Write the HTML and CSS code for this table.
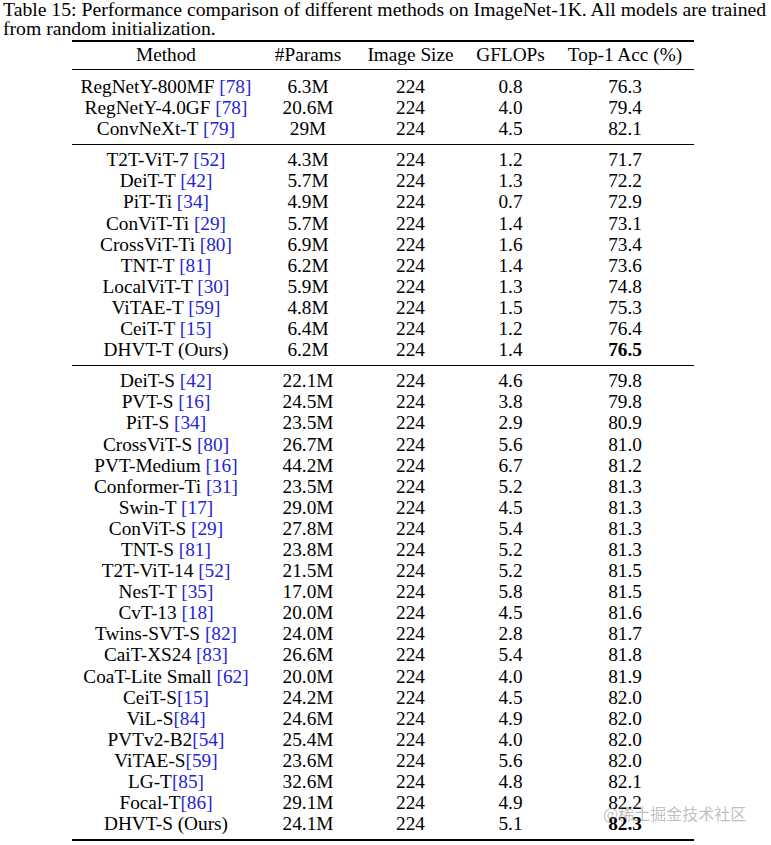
FILE: index.html
```html
<!DOCTYPE html>
<html>
<head>
<meta charset="utf-8">
<link rel="stylesheet" href="styles.css">
</head>
<body>
<div class="page">
  <p class="caption">Table 15: Performance comparison of different methods on ImageNet-1K. All models are trained from random initialization.</p>
  <div class="tbl">
    <div class="row head"><span>Method</span><span>#Params</span><span>Image Size</span><span>GFLOPs</span><span>Top-1 Acc (%)</span></div>
    <div class="group g1">
      <div class="row"><span>RegNetY-800MF <a>[78]</a></span><span>6.3M</span><span>224</span><span>0.8</span><span>76.3</span></div>
      <div class="row"><span>RegNetY-4.0GF <a>[78]</a></span><span>20.6M</span><span>224</span><span>4.0</span><span>79.4</span></div>
      <div class="row"><span>ConvNeXt-T <a>[79]</a></span><span>29M</span><span>224</span><span>4.5</span><span>82.1</span></div>
    </div>
    <div class="group">
      <div class="row"><span>T2T-ViT-7 <a>[52]</a></span><span>4.3M</span><span>224</span><span>1.2</span><span>71.7</span></div>
      <div class="row"><span>DeiT-T <a>[42]</a></span><span>5.7M</span><span>224</span><span>1.3</span><span>72.2</span></div>
      <div class="row"><span>PiT-Ti <a>[34]</a></span><span>4.9M</span><span>224</span><span>0.7</span><span>72.9</span></div>
      <div class="row"><span>ConViT-Ti <a>[29]</a></span><span>5.7M</span><span>224</span><span>1.4</span><span>73.1</span></div>
      <div class="row"><span>CrossViT-Ti <a>[80]</a></span><span>6.9M</span><span>224</span><span>1.6</span><span>73.4</span></div>
      <div class="row"><span>TNT-T <a>[81]</a></span><span>6.2M</span><span>224</span><span>1.4</span><span>73.6</span></div>
      <div class="row"><span>LocalViT-T <a>[30]</a></span><span>5.9M</span><span>224</span><span>1.3</span><span>74.8</span></div>
      <div class="row"><span>ViTAE-T <a>[59]</a></span><span>4.8M</span><span>224</span><span>1.5</span><span>75.3</span></div>
      <div class="row"><span>CeiT-T <a>[15]</a></span><span>6.4M</span><span>224</span><span>1.2</span><span>76.4</span></div>
      <div class="row"><span>DHVT-T (Ours)</span><span>6.2M</span><span>224</span><span>1.4</span><span><b>76.5</b></span></div>
    </div>
    <div class="group">
      <div class="row"><span>DeiT-S <a>[42]</a></span><span>22.1M</span><span>224</span><span>4.6</span><span>79.8</span></div>
      <div class="row"><span>PVT-S <a>[16]</a></span><span>24.5M</span><span>224</span><span>3.8</span><span>79.8</span></div>
      <div class="row"><span>PiT-S <a>[34]</a></span><span>23.5M</span><span>224</span><span>2.9</span><span>80.9</span></div>
      <div class="row"><span>CrossViT-S <a>[80]</a></span><span>26.7M</span><span>224</span><span>5.6</span><span>81.0</span></div>
      <div class="row"><span>PVT-Medium <a>[16]</a></span><span>44.2M</span><span>224</span><span>6.7</span><span>81.2</span></div>
      <div class="row"><span>Conformer-Ti <a>[31]</a></span><span>23.5M</span><span>224</span><span>5.2</span><span>81.3</span></div>
      <div class="row"><span>Swin-T <a>[17]</a></span><span>29.0M</span><span>224</span><span>4.5</span><span>81.3</span></div>
      <div class="row"><span>ConViT-S <a>[29]</a></span><span>27.8M</span><span>224</span><span>5.4</span><span>81.3</span></div>
      <div class="row"><span>TNT-S <a>[81]</a></span><span>23.8M</span><span>224</span><span>5.2</span><span>81.3</span></div>
      <div class="row"><span>T2T-ViT-14 <a>[52]</a></span><span>21.5M</span><span>224</span><span>5.2</span><span>81.5</span></div>
      <div class="row"><span>NesT-T <a>[35]</a></span><span>17.0M</span><span>224</span><span>5.8</span><span>81.5</span></div>
      <div class="row"><span>CvT-13 <a>[18]</a></span><span>20.0M</span><span>224</span><span>4.5</span><span>81.6</span></div>
      <div class="row"><span>Twins-SVT-S <a>[82]</a></span><span>24.0M</span><span>224</span><span>2.8</span><span>81.7</span></div>
      <div class="row"><span>CaiT-XS24 <a>[83]</a></span><span>26.6M</span><span>224</span><span>5.4</span><span>81.8</span></div>
      <div class="row"><span>CoaT-Lite Small <a>[62]</a></span><span>20.0M</span><span>224</span><span>4.0</span><span>81.9</span></div>
      <div class="row"><span>CeiT-S<a>[15]</a></span><span>24.2M</span><span>224</span><span>4.5</span><span>82.0</span></div>
      <div class="row"><span>ViL-S<a>[84]</a></span><span>24.6M</span><span>224</span><span>4.9</span><span>82.0</span></div>
      <div class="row"><span>PVTv2-B2<a>[54]</a></span><span>25.4M</span><span>224</span><span>4.0</span><span>82.0</span></div>
      <div class="row"><span>ViTAE-S<a>[59]</a></span><span>23.6M</span><span>224</span><span>5.6</span><span>82.0</span></div>
      <div class="row"><span>LG-T<a>[85]</a></span><span>32.6M</span><span>224</span><span>4.8</span><span>82.1</span></div>
      <div class="row"><span>Focal-T<a>[86]</a></span><span>29.1M</span><span>224</span><span>4.9</span><span>82.2</span></div>
      <div class="row"><span>DHVT-S (Ours)</span><span>24.1M</span><span>224</span><span>5.1</span><span><b>82.3</b></span></div>
    </div>
  </div>
  <div class="watermark">@稀土掘金技术社区</div>
</div>
</body>
</html>
```

FILE: styles.css
```css
html, body {
  margin: 0;
  padding: 0;
  background: #ffffff;
}

.page {
  position: relative;
  width: 771px;
  height: 845px;
  overflow: hidden;
  font-family: "Liberation Serif", "Times New Roman", serif;
  font-size: 19.3px;
  color: #000;
}

.caption {
  margin: 0 0 0 3px;
  width: 768px;
  font-size: 19.7px;
  line-height: 19.4px;
}

.tbl {
  margin: 1.2px 0 0 72px;
  width: 622px;
  border-top: 2px solid #000;
  border-bottom: 2px solid #000;
}

.row {
  display: grid;
  grid-template-columns: 188px 96px 109px 91px 138px;
  height: 21.1px;
  line-height: 21.1px;
  text-align: center;
  white-space: nowrap;
}

.row.head {
  height: 28px;
  padding-top: 2px;
  box-sizing: border-box;
  border-bottom: 1px solid #000;
}

.group {
  padding: 4px 0 5px;
}

.group.g1 {
  padding: 6px 0 5px;
}

.group + .group {
  border-top: 1px solid #000;
}

.row a {
  color: #2424d6;
  text-decoration: none;
}

.row b {
  font-weight: bold;
}

.watermark {
  position: absolute;
  left: 603px;
  top: 803px;
  font-family: "Noto Sans CJK SC", "Noto Sans", sans-serif;
  font-size: 16px;
  line-height: 20px;
  color: rgba(110, 110, 110, 0.45);
  white-space: nowrap;
}
```
